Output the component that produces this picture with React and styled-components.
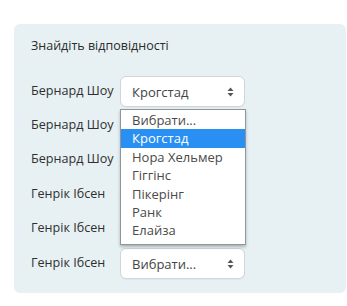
import styled, { createGlobalStyle } from "styled-components";

const GlobalStyle = createGlobalStyle`
  body {
    margin: 0;
    background: #fff;
    font-family: "Open Sans", "Noto Sans", sans-serif;
  }
`;

const Page = styled.div`
  padding: 24px 1px 0 14px;
`;

const Panel = styled.div`
  background: #e7f1f4;
  border-radius: 6px;
  padding: 13px 17px 14px 17px;
`;

const Title = styled.div`
  font-size: 12.5px;
  color: #2b2b2b;
  line-height: 17px;
  margin-bottom: 22px;
`;

const Rows = styled.div`
  display: flex;
  flex-direction: column;
  gap: 3px;
  position: relative;
`;

const Row = styled.div`
  display: grid;
  grid-template-columns: 89px 125px;
  align-items: center;
  height: 31.4px;
`;

const Label = styled.span`
  font-size: 12.6px;
  color: #2f2f2f;
  white-space: nowrap;
  margin-top: -3px;
`;

const Select = styled.div`
  box-sizing: border-box;
  height: 31.4px;
  background: #fff;
  border: 1px solid #cfd6dc;
  border-radius: 6px;
  display: flex;
  align-items: center;
  justify-content: space-between;
  padding: 0 10px 0 11px;
  font-size: 13px;
  color: #444;
  box-shadow: 0 1px 1px rgba(0, 0, 0, 0.04);
`;

const Arrows = () => (
  <svg width="7" height="10" viewBox="0 0 7 10">
    <path d="M3.5 0.5 L6.5 4 H0.5 Z" fill="#555" />
    <path d="M3.5 9.5 L6.5 6 H0.5 Z" fill="#555" />
  </svg>
);

const List = styled.ul`
  position: absolute;
  left: 89px;
  top: 33px;
  width: 126px;
  box-sizing: border-box;
  margin: 0;
  padding: 1px 0 4px 0;
  list-style: none;
  background: #fff;
  border: 1px solid #8f959a;
  box-shadow: 0 2px 3px rgba(0, 0, 0, 0.25);
`;

const Option = styled.li`
  font-size: 13px;
  line-height: 18.4px;
  padding: 0 0 0 11px;
  color: ${(p) => (p.$active ? "#fff" : "#4a4a4a")};
  background: ${(p) => (p.$active ? "#2a8ff2" : "transparent")};
`;

// rows 2-5 sit under the open list, so only their frames show
const rows = [
  { name: "Бернард Шоу", value: "Крогстад" },
  { name: "Бернард Шоу", value: "" },
  { name: "Бернард Шоу", value: "" },
  { name: "Генрік Ібсен", value: "" },
  { name: "Генрік Ібсен", value: "" },
  { name: "Генрік Ібсен", value: "Вибрати..." },
];

const options = [
  "Вибрати...",
  "Крогстад",
  "Нора Хельмер",
  "Гіггінс",
  "Пікерінг",
  "Ранк",
  "Елайза",
];

export default function App() {
  return (
    <>
      <GlobalStyle />
      <Page>
        <Panel>
          <Title>Знайдіть відповідності</Title>
          <Rows>
            {rows.map((r, i) => (
              <Row key={i}>
                <Label>{r.name}</Label>
                <Select>
                  <span>{r.value}</span>
                  <Arrows />
                </Select>
              </Row>
            ))}
            <List>
              {options.map((o) => (
                <Option key={o} $active={o === "Крогстад"}>
                  {o}
                </Option>
              ))}
            </List>
          </Rows>
        </Panel>
      </Page>
    </>
  );
}
